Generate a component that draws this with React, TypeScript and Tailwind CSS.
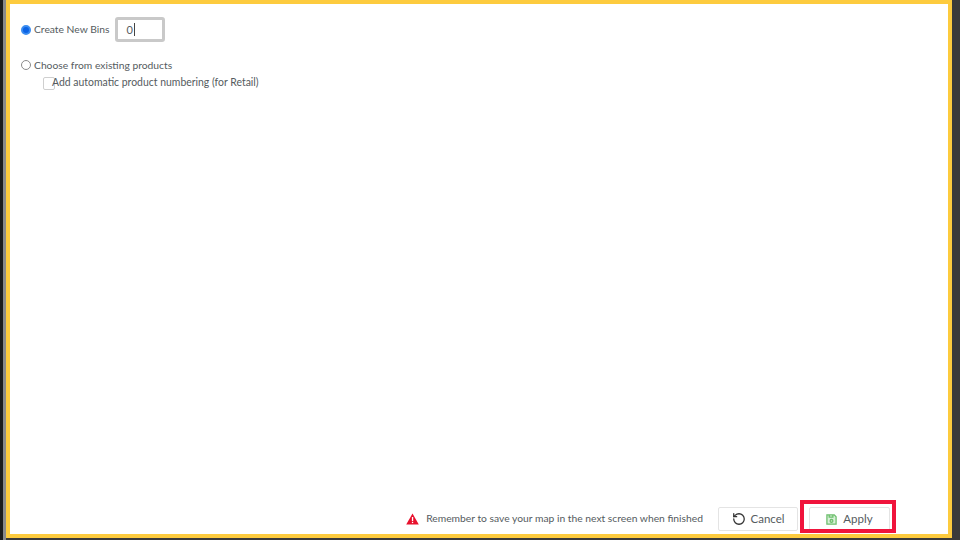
import React from 'react';
import { RotateCcw } from 'lucide-react';

function SaveIcon() {
  return (
    <svg width="11" height="11" viewBox="0 0 12 12" fill="none" stroke="#6cbf6c" strokeWidth="1.4">
      <path d="M1 1h8l2 2v8H1z" fill="#d8f0d8" />
      <path d="M3.5 1v2.5h4V1" />
      <circle cx="6" cy="7.5" r="1.5" />
    </svg>
  );
}

export default function App() {
  return (
    <div className="w-[960px] h-[540px] overflow-hidden bg-[#3a3a3a] flex font-['Lato','Noto_Sans',sans-serif] text-[#555b60]">
      <div className="w-[6px] shrink-0 flex">
        <div className="w-[3px] bg-[#1c1c1c]" />
        <div className="w-[3px] bg-[#8a8a8a]" />
      </div>

      <div className="w-[946px] h-[538px] shrink-0 border-[4px] border-[#fdcb3e] bg-white flex flex-col">
        <div className="flex-1 pl-[11px] pt-[13px]">
          <div className="flex items-center h-[25px]">
            <span className="w-[10px] h-[10px] rounded-full border-[2px] border-[#3b8df0] bg-[#0b63e5]" />
            <span className="ml-[3px] text-[10.3px] leading-none">Create New Bins</span>
            <div className="ml-[6px] w-[50px] h-[25px] border-[3px] border-[#c9c9c9] rounded-[3px] flex items-center pl-[8px] text-[11px]">
              <span className="border-r border-[#444] pr-px leading-[13px]">0</span>
            </div>
          </div>
          <div className="flex items-center mt-[16px] h-[14px]">
            <span className="w-[10px] h-[10px] rounded-full border border-[#8a8a8a] bg-white" />
            <span className="ml-[3px] text-[10.3px] leading-none">Choose from existing products</span>
          </div>
          <div className="flex items-center ml-[22px] mt-[3px] h-[14px]">
            <span className="w-[12px] h-[13px] rounded-[2px] border border-[#cfcfcf] bg-white shrink-0 mt-[2px]" />
            <span className="ml-[-3px] text-[10.45px] leading-none">Add automatic product numbering (for Retail)</span>
          </div>
        </div>

        <div className="relative h-[33px] flex items-start justify-end pr-[58px] pt-[6px]">
          <svg width="13" height="12" viewBox="0 0 13 12" className="mt-[6px]">
            <path d="M6.5 0.5 L12.8 11.5 H0.2 Z" fill="#e8112d" />
            <rect x="5.9" y="4" width="1.3" height="4" fill="#fff" />
            <rect x="5.9" y="8.8" width="1.3" height="1.3" fill="#fff" />
          </svg>
          <span className="ml-[7px] mt-[5px] text-[10.3px] leading-[13px]">Remember to save your map in the next screen when finished</span>
          <button className="ml-[15px] w-[80px] h-[24px] border border-[#e4e4e4] rounded-[2px] bg-white flex items-center justify-center gap-[5px] text-[11.5px] text-[#555b60]">
            <RotateCcw size={14} strokeWidth={2.2} className="text-[#333]" />
            Cancel
          </button>
          <button className="ml-[11px] w-[81px] h-[24px] border border-[#e4e4e4] rounded-[2px] bg-white flex items-center justify-center gap-[6px] text-[11.5px] text-[#555b60]">
            <SaveIcon />
            Apply
          </button>
          {/* red highlight drawn over the Apply button */}
          <div className="absolute right-[52px] top-[-1px] w-[96px] h-[33px] border-[4px] border-[#f0143c]" />
        </div>
      </div>

      <div className="flex-1 bg-[#3a3a3a]" />
    </div>
  );
}
